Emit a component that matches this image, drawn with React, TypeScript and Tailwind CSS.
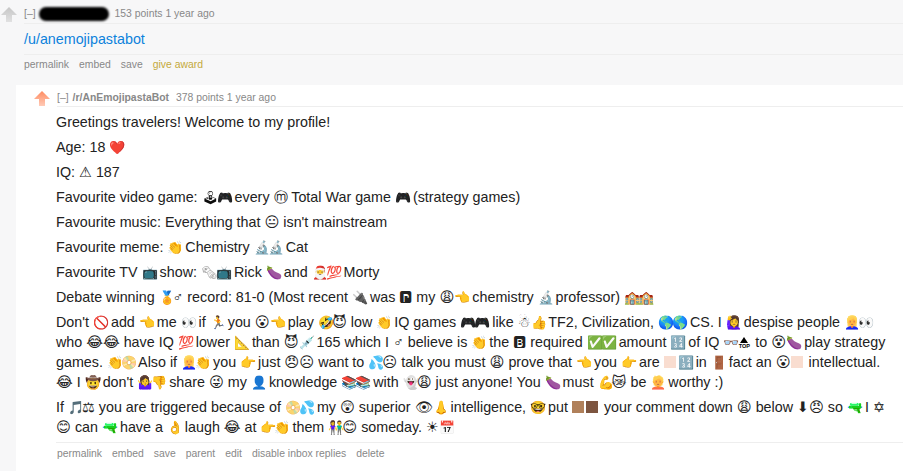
import React from 'react';

const font = { fontFamily: '"Liberation Sans", "DejaVu Sans", sans-serif' };

const Arrow = ({ color }: { color: string }) => (
  <svg width="16" height="15" viewBox="0 0 16 15" className="block">
    <defs>
      <linearGradient id={'fade' + color.slice(1)} x1="0" y1="0" x2="0" y2="1">
        <stop offset="0" stopColor={color} />
        <stop offset="1" stopColor={color} stopOpacity="0.45" />
      </linearGradient>
    </defs>
    <path d="M8 0 L16 8 H11 V15 H5 V8 H0 Z" fill={'url(#fade' + color.slice(1) + ')'} />
  </svg>
);

// these come out of DejaVu in the reference, black and at text size
const mono = '😐😩😮😈😂😠☹😜😲😊😿⚠♂⚖⬇☀✡☃🅿🅱😵👁';

const emojiClass = 'text-[13px] leading-[0] tracking-[-2px]';

const Square = ({ className }: { className: string }) => (
  <span className={'inline-block w-[12px] h-[12px] mr-[2px] align-[-1px] ' + className} />
);

const Top = () => (
  <span className="inline-flex flex-col items-center w-[14px] h-[13px] align-text-bottom text-black">
    <span className="w-0 h-0 border-x-[4px] border-x-transparent border-b-[6px] border-b-black" />
    <span className="text-[5.5px] leading-[6px] font-bold">TOP</span>
  </span>
);

const special: Record<string, React.ReactNode> = {
  '🏻': <Square className="bg-[#f9ddd0]" />,
  '🏽': <Square className="bg-[#b0805a]" />,
  '🏿': <Square className="bg-[#7d5540]" />,
  '🔝': <Top />,
  '🎮': <span className={emojiClass + ' brightness-[0.35]'}>🎮</span>,
  '🕹': <span className={emojiClass + ' brightness-[0.35] grayscale'}>🕹</span>,
  '🔫': <span className={emojiClass + ' hue-rotate-[80deg]'}>🔫</span>,
  '🗞': <span className={emojiClass + ' opacity-40'}>🗞</span>,
  '👱‍♀️': <span className={emojiClass + ' hue-rotate-[-20deg]'}>👱‍♀️</span>,
  '👱': <span className={emojiClass + ' hue-rotate-[-20deg]'}>👱</span>,
};

const Emojified = ({ text }: { text: string }) => {
  // skin tone squares would glue onto the char before them, cut them out first
  const chunks = text.split(/([🏻🏽🏿])/u);
  const parts = chunks.flatMap((chunk) =>
    Array.from(new Intl.Segmenter().segment(chunk), (s) => s.segment)
  );
  return (
    <>
      {parts.map((c, i) => {
        if (special[c]) return <React.Fragment key={i}>{special[c]}</React.Fragment>;
        if (/\p{Extended_Pictographic}/u.test(c) && !mono.includes(c)) {
          return <span key={i} className={emojiClass}>{c}</span>;
        }
        return c;
      })}
    </>
  );
};

const paragraphs = [
  'Greetings travelers! Welcome to my profile!',
  'Age: 18 ❤️',
  'IQ: ⚠ 187',
  'Favourite video game: 🕹🎮 every ⓜ Total War game 🎮 (strategy games)',
  "Favourite music: Everything that 😐 isn't mainstream",
  'Favourite meme: 👏 Chemistry 🔬🔬 Cat',
  'Favourite TV 📺 show: 🗞📺 Rick 🍆 and 🎅💯 Morty',
  'Debate winning 🏅♂ record: 81-0 (Most recent 🔌 was 🅿 my 😩👈 chemistry 🔬 professor) 🏫🏫',
  "Don't 🚫 add 👈 me 👀 if 🏃 you 😮👈 play 🤣😈 low 👏 IQ games 🎮🎮 like ☃👍 TF2, Civilization, 🌎🌎 CS. I 🙋‍♀️ despise people 👱‍♀️👀 who 😂😂 have IQ 💯 lower 📐 than 😈💉 165 which I ♂ believe is 👏 the 🅱 required ✅✅ amount 🔢 of IQ 👓🔝 to 😵🍆 play strategy games. 👏📀 Also if 👱‍♀️👏 you 👉 just 😠☹ want to 💦☹ talk you must 😩 prove that 👈 you 👉 are 🏻🔢 in 🚪 fact an 😮🏻 intellectual. 😂 I 🤠 don't 🤷‍♀️👎 share 😜 my 👤 knowledge 📚📚 with 👻😩 just anyone! You 🍆 must 💪😿 be 👱 worthy :)",
  'If 🎵⚖ you are triggered because of 📀💦 my 😲 superior 👁👃 intelligence, 🤓 put 🏽🏿 your comment down 😩 below ⬇😠 so 🔫 I ✡ 😊 can 🔫 have a 👌 laugh 😂 at 👉👏 them 👫😊 someday. ☀📅',
];

export default function App() {
  return (
    <div className="w-[903px] h-[471px] overflow-hidden bg-[#f7f7f8]" style={font}>
      <div className="flex pl-[1px] pt-[4px]">
        <div className="w-[16px] pt-[3px]"><Arrow color="#c6c6c6" /></div>
        <div className="ml-[7px] flex-1">
          <div className="flex items-center h-[20px] text-[10.4px] text-[#888] border-b border-[#eeeeee]">
            <span>[–]</span>
            <span className="ml-[3px] w-[70px] h-[14px] rounded-full bg-black blur-[1px]" />
            <span className="ml-[6px]">153 points 1 year ago</span>
          </div>
          <div className="text-[14.3px] leading-[20px] text-[#0c82dc] mt-[5px] pb-[5px] border-b border-[#eeeeee]">/u/anemojipastabot</div>
          <div className="flex gap-[10px] text-[10.4px] text-[#888] mt-[2px]">
            <span>permalink</span><span>embed</span><span>save</span><span className="text-[#c4a93b]">give award</span>
          </div>
        </div>
      </div>
      <div className="flex ml-[16px] mt-[12px] bg-white pt-[6px] h-[400px]">
        <div className="w-[16px] ml-[18px]"><Arrow color="#ff8b60" /></div>
        <div className="ml-[7px] flex-1 min-w-0">
          <div className="flex items-center h-[16px] text-[10.4px] text-[#888] border-b border-[#eeeeee]">
            <span>[–]</span>
            <span className="ml-[4px] font-bold">/r/AnEmojipastaBot</span>
            <span className="ml-[7px]">378 points 1 year ago</span>
          </div>
          <div className="-ml-[1px] pr-[10px] border-b border-[#eeeeee] text-[14.3px] leading-[20px] text-[#222]">
            {paragraphs.map((p, i) => (
              <p key={i} className="my-[5px]"><Emojified text={p} /></p>
            ))}
          </div>
          <div className="flex gap-[10px] text-[10.4px] text-[#888] mt-[3px]">
            <span>permalink</span><span>embed</span><span>save</span><span>parent</span><span>edit</span><span>disable inbox replies</span><span>delete</span>
          </div>
          <div className="-ml-[8px] mt-[11px] h-[4px] bg-[#f7f7f8]" />
        </div>
      </div>
    </div>
  );
}
